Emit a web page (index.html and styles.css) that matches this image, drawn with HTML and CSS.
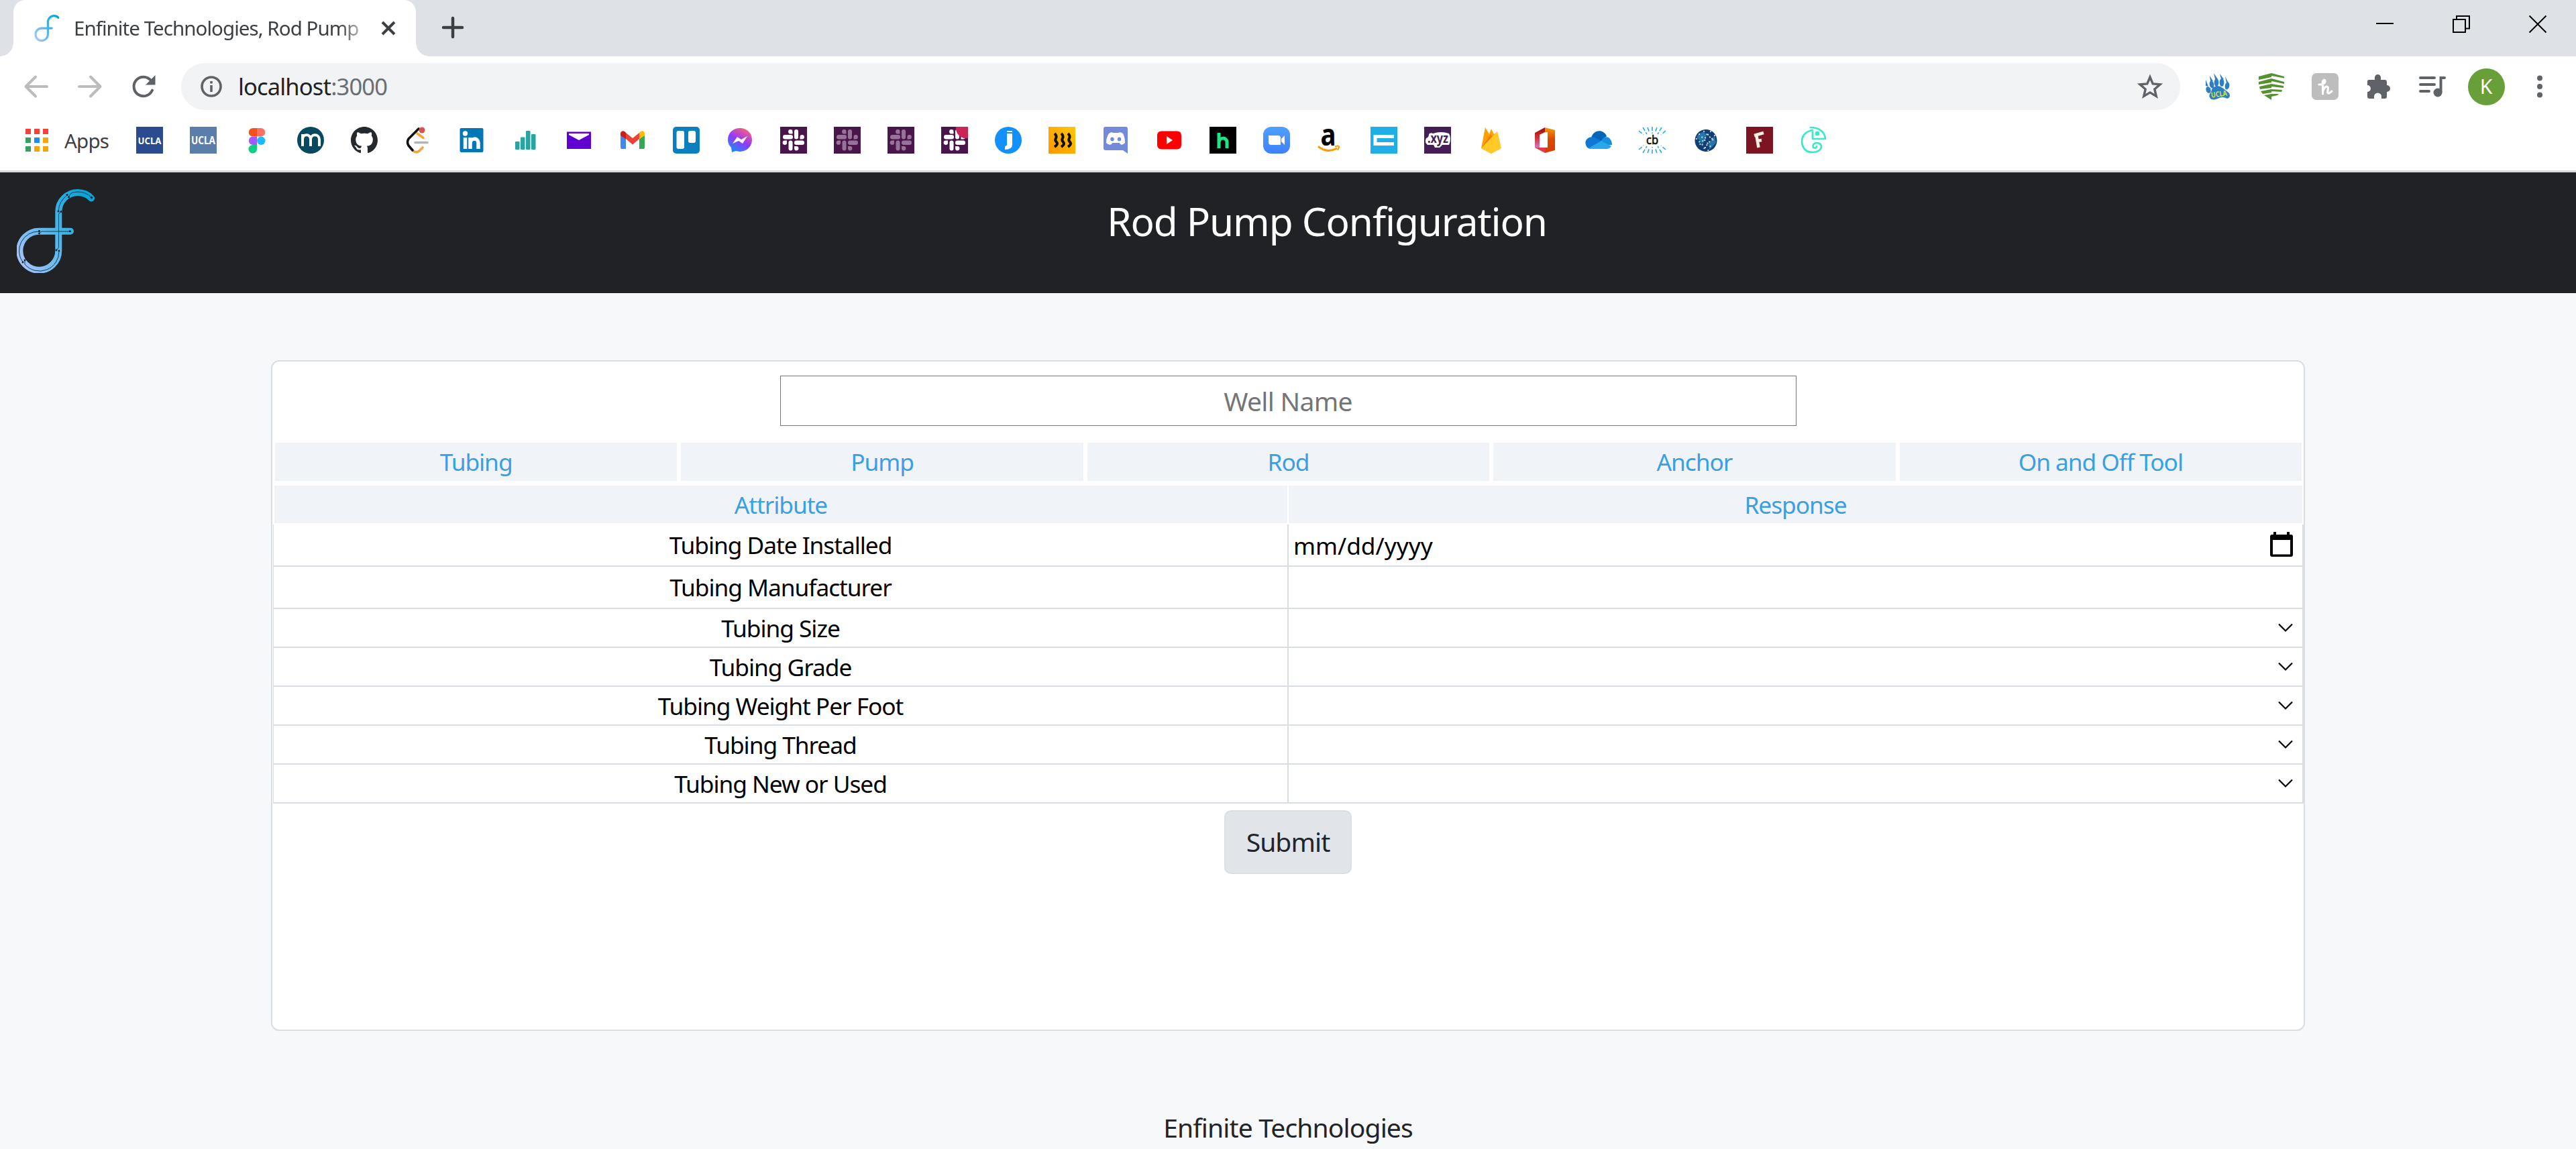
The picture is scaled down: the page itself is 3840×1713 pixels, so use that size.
FILE: index.html
```html
<!DOCTYPE html>
<html lang="en">
<head>
<meta charset="utf-8">
<title>Enfinite Technologies, Rod Pump Configuration</title>
<link rel="stylesheet" href="styles.css">
</head>
<body>
<svg class="defs" width="0" height="0" aria-hidden="true">
  <defs>
    <linearGradient id="brand" gradientUnits="userSpaceOnUse" x1="0" y1="100" x2="112" y2="30"><stop offset="0" stop-color="#a3c3fa"/><stop offset=".5" stop-color="#52b6e8"/><stop offset="1" stop-color="#0aa6d8"/></linearGradient>
    <linearGradient id="msg" x1="0.2" y1="1" x2="0.75" y2="0"><stop offset="0" stop-color="#1292ff"/><stop offset=".5" stop-color="#9139fb"/><stop offset="1" stop-color="#ff5f78"/></linearGradient>
    <linearGradient id="coil" x1="0" y1="1" x2="1" y2="0"><stop offset="0" stop-color="#ff9500"/><stop offset="1" stop-color="#ffc800"/></linearGradient>
    <linearGradient id="zoomg" x1="0" y1="0" x2="0" y2="1"><stop offset="0" stop-color="#4fa0ff"/><stop offset="1" stop-color="#3f80fb"/></linearGradient>
    <linearGradient id="office" x1="0" y1="0" x2="0" y2="1"><stop offset="0" stop-color="#9c0e10"/><stop offset=".5" stop-color="#d2322c"/><stop offset="1" stop-color="#d673c5"/></linearGradient>
    <linearGradient id="office2" x1="0" y1="0" x2="0" y2="1"><stop offset="0" stop-color="#f59a00"/><stop offset=".45" stop-color="#dd4a00"/><stop offset="1" stop-color="#d83b01"/></linearGradient>
    <symbol id="logo" viewBox="0 0 116 125">
      <path fill="none" stroke="url(#brand)" stroke-width="10" stroke-linecap="round" d="M111 13.500C106 8 99 5 91 5A28.700 28.700 0 0 0 62.300 33.700V92A29 29 0 1 1 33.300 62.700H80"/>
    </symbol>
    <symbol id="slack" viewBox="0 0 40 40">
      <rect x="4" y="12" width="15" height="6.500" rx="3.200"/><rect x="21" y="4" width="6" height="14.500" rx="3"/><rect x="21" y="20.500" width="15" height="6.500" rx="3.200"/><rect x="12.500" y="20.500" width="6" height="15" rx="3"/>
      <path d="M18.500 10.500H15.500A3.200 3.200 0 1 1 18.500 7.300ZM29.500 18.500V15.300A3.200 3.200 0 1 1 32.700 18.500ZM21 29H24A3.200 3.200 0 1 1 21 32.300ZM10 20.500V23.700A3.200 3.200 0 1 1 7 20.500Z"/>
    </symbol>
  </defs>
</svg>

<div class="tabstrip">
  <div class="tab">
    <svg class="favicon" viewBox="0 0 116 125"><use href="#logo"/></svg>
    <span class="tab-title">Enfinite Technologies, Rod Pump</span>
    <svg class="tab-close" viewBox="0 0 24 24"><path d="M3 3L21 21M21 3L3 21"/></svg>
  </div>
  <svg class="newtab" viewBox="0 0 32 32"><path d="M16 2V30M2 16H30"/></svg>
  <div class="window-controls">
    <svg viewBox="0 0 26 26"><path d="M0 12H26"/></svg>
    <svg viewBox="0 0 26 26"><path d="M1 6H19V25H1ZM6 6V1H25V19.500H19"/></svg>
    <svg viewBox="0 0 26 26"><path d="M.5.5L25.500 25.500M25.500.5L.5 25.500"/></svg>
  </div>
</div>

<div class="toolbar">
  <div class="navigation">
    <svg class="dim" viewBox="0 0 40 40"><path d="M36 20H5M19 5.500L4.500 20L19 34.500"/></svg>
    <svg class="dim" viewBox="0 0 40 40"><path d="M4 20H35M21 5.500L35.500 20L21 34.500"/></svg>
    <svg viewBox="0 0 40 40"><path d="M33 25.500A14.300 14.300 0 1 1 31 11"/><path class="solid" d="M37.500 3V17.500H23Z"/></svg>
  </div>
  <div class="omnibox">
    <svg class="info" viewBox="0 0 32 32"><circle cx="16" cy="16" r="14"/><path d="M16 14V24M16 8V11.500"/></svg>
    <span class="url">localhost<span class="port">:3000</span></span>
    <svg class="star" viewBox="0 0 38 36"><path d="M19 4L23.200 14L34 14.900L25.800 22L28.300 32.500L19 26.900L9.700 32.500L12.200 22L4 14.900L14.800 14Z"/></svg>
  </div>
  <div class="extensions">
    <svg viewBox="0 0 40 40"><g fill="#2d7fc1"><path d="M12 22Q20 16 27 22Q33 26 37 30Q40 36 34 38Q27 34 20 38Q10 42 8 36Q6 33 10 28Z"/><ellipse cx="6" cy="25" rx="3.500" ry="5" transform="rotate(-20 6 25)"/><ellipse cx="11" cy="17" rx="3.300" ry="5.500" transform="rotate(-12 11 17)"/><ellipse cx="18" cy="14" rx="3.400" ry="6"/><ellipse cx="26" cy="14" rx="3.400" ry="6"/><ellipse cx="34" cy="19" rx="3.300" ry="5.500" transform="rotate(12 34 19)"/><path d="M2 19L2 10L6 20ZM9 12L8 4L13 12ZM16 9L14 0L20 9ZM25 9L23 1L29 9ZM33 15L31 5L36 15Z"/></g><text x="22" y="35" fill="#dce33a" font-size="11" font-weight="700" text-anchor="middle" textLength="24" lengthAdjust="spacingAndGlyphs" transform="rotate(-8 22 33)">UCLA</text></svg>
    <svg viewBox="0 0 40 40"><g fill="#55912f"><path d="M1 5L20 0V6L1 10ZM20 0L39 5V7.500L20 4Z"/><path d="M1 13L20 8V14L1 17ZM20 8L39 13V16L20 12Z"/><path d="M2 20L20 16V22L3 24ZM20 16L38 19V22L20 20Z"/><path d="M4 27L20 24V29L7 31ZM20 24L36 25L35 28L20 27Z"/><path d="M9 33L20 31L31 31L29 33L20 35V40Z"/></g></svg>
    <svg viewBox="0 0 40 40"><rect width="40" height="40" rx="7" fill="#bdbdbd"/><path d="M11 17Q20 17 20 12Q19 8 16.500 12V31M16.500 27Q20 18 24 21C26 23 21 31 26 30L30 27" fill="none" stroke="#fff" stroke-width="3.200" stroke-linecap="round" stroke-linejoin="round"/></svg>
    <svg viewBox="0 0 40 40"><path fill="#5f6368" d="M5 10H14V6.500A4.500 4.500 0 0 1 23 6.500V10H29Q32 10 32 13V18A5 5 0 0 1 32 28V35Q32 38 29 38H24V35A5 5 0 0 0 13 35V38H6Q3 38 3 35V28A4.800 4.800 0 0 0 3 18V13Q3 10 5 10Z"/></svg>
    <svg viewBox="0 0 40 40"><g fill="none" stroke="#5f6368" stroke-width="4" stroke-linecap="round"><path d="M2 7H23M2 17H23M2 27H15"/><path d="M32.500 28V7H38"/></g><ellipse cx="28" cy="29" rx="6.500" ry="6.500" fill="#5f6368"/></svg>
    <span class="avatar">K</span>
    <svg viewBox="0 0 40 40" fill="#5f6368"><circle cx="20" cy="7.500" r="4"/><circle cx="20" cy="20" r="4"/><circle cx="20" cy="32.500" r="4"/></svg>
  </div>
</div>

<div class="bookmarks">
  <div class="apps">
    <svg viewBox="0 0 34 34"><path fill="#f83f38" d="M0 0H8V8H0ZM13 0H21V8H13ZM26 0H34V8H26Z"/><path fill="#36a05c" d="M0 13H8V21H0ZM0 26H8V34H0Z"/><path fill="#1f8bf5" d="M13 13H21V21H13Z"/><path fill="#f5a506" d="M26 13H34V21H26ZM13 26H21V34H13ZM26 26H34V34H26Z"/></svg>
    <span>Apps</span>
  </div>
  <svg viewBox="0 0 40 40"><rect width="40" height="40" fill="#2b4a90"/><text x="20" y="26" fill="#fff" font-size="15" font-weight="700" text-anchor="middle" textLength="35" lengthAdjust="spacingAndGlyphs">UCLA</text></svg>
  <svg viewBox="0 0 40 40"><rect width="40" height="40" fill="#5a7daa"/><text x="20" y="26" fill="#fff" font-size="16" font-weight="700" text-anchor="middle" textLength="36" lengthAdjust="spacingAndGlyphs">UCLA</text></svg>
  <svg viewBox="0 0 40 40"><path fill="#f4511e" d="M20 2H14A6.200 6.200 0 0 0 14 14.500H20Z"/><path fill="#ff7262" d="M20 2H26A6.200 6.200 0 0 1 26 14.500H20Z"/><path fill="#a259ff" d="M20 14.500H14A6.200 6.200 0 0 0 14 27H20Z"/><circle cx="26.300" cy="20.800" r="6.200" fill="#1abcfe"/><path fill="#0acf83" d="M20 27H14A6.300 6.300 0 1 0 20 33.500Z"/></svg>
  <svg viewBox="0 0 40 40"><circle cx="20" cy="20" r="20" fill="#07495f"/><path d="M8 29V11M8 19C8 10 20 10 20 19V29M20 19C20 10 33 10 33 19V29" fill="none" stroke="#fff" stroke-width="4"/></svg>
  <svg viewBox="0 0 16 16"><path fill="#24292e" d="M8 0C3.580 0 0 3.580 0 8c0 3.540 2.290 6.530 5.470 7.590.4.070.55-.17.55-.38 0-.19-.01-.82-.01-1.490-2.010.37-2.530-.49-2.690-.94-.09-.23-.48-.94-.82-1.130-.28-.15-.68-.52-.01-.53.63-.01 1.080.58 1.230.82.72 1.210 1.870.87 2.330.66.070-.52.28-.87.51-1.070-1.780-.2-3.640-.89-3.640-3.950 0-.87.31-1.590.82-2.150-.08-.2-.36-1.020.08-2.120 0 0 .67-.21 2.200.82.64-.18 1.320-.27 2-.27s1.360.09 2 .27c1.530-1.040 2.200-.82 2.200-.82.44 1.100.16 1.920.08 2.120.51.560.82 1.270.82 2.150 0 3.070-1.870 3.750-3.650 3.950.29.25.54.73.54 1.480 0 1.070-.01 1.930-.01 2.200 0 .21.15.46.55.38A8.010 8.010 0 0 0 16 8c0-4.420-3.580-8-8-8Z"/></svg>
  <svg viewBox="0 0 40 40" fill="none" stroke-width="3.600" stroke-linecap="round" stroke-linejoin="round"><path stroke="#f9a533" d="M19 10L28 16.500M12 35Q17 40 22 36L27 31"/><path stroke="#111" d="M21 3L6 18Q3 23 6 28L12 35"/><path stroke="#b3b3b3" d="M16 23.500H34"/><circle cx="26" cy="5" r="4.500" fill="#d65353"/></svg>
  <svg viewBox="0 0 40 40"><rect x="2.500" y="2" width="35" height="36" rx="2" fill="#0177b5"/><circle cx="10.500" cy="10" r="3.700" fill="#fff"/><path d="M10.500 16V33M18 16V33M18 25C18 16 30 16 30 24V33" fill="none" stroke="#fff" stroke-width="5.500"/></svg>
  <svg viewBox="0 0 40 40" fill="#27a5a5"><rect x="5" y="22" width="6.500" height="12" rx="1"/><rect x="13" y="15.500" width="6.500" height="18.500" rx="1"/><rect x="21" y="6" width="6.500" height="28" rx="1"/><rect x="29" y="11" width="6.500" height="23" rx="1"/></svg>
  <svg viewBox="0 0 40 40"><rect x="2" y="7.500" width="36" height="25.500" fill="#6001d2"/><path fill="#fff" d="M5 10H35V12L20 20L5 12Z"/></svg>
  <svg viewBox="0 0 40 40"><path fill="#4285f4" d="M2 12L10 17V33H4Q2 33 2 31Z"/><path fill="#34a853" d="M38 12L30 17V33H36Q38 33 38 31Z"/><path fill="#ea4335" d="M10 9L20 17L30 9V18L20 26.500L10 18Z"/><path fill="#c5221f" d="M2 12C1 6 7 4 10 9V18.500L2 13Z"/><path fill="#fbbc04" d="M38 12C39 6 33 4 30 9V18.500L38 13Z"/></svg>
  <svg viewBox="0 0 40 40"><rect width="40" height="40" rx="5" fill="#0c7fbf"/><rect x="5.500" y="6" width="11.500" height="27" rx="3" fill="#fff"/><rect x="23" y="6" width="11" height="18" rx="3" fill="#fff"/></svg>
  <svg viewBox="0 0 40 40"><path fill="url(#msg)" d="M20 2C10 2 2 9 2 19.500Q2 26 7 31L8 38L14 36C27 40 38 31 38 19.500C38 9 30 2 20 2Z"/><path fill="#fff" d="M9 25L16 15L22 19L31 14L24 25L18 21Z"/></svg>
  <svg viewBox="0 0 40 40"><rect width="40" height="40" fill="#4a154b"/><use href="#slack" fill="#fff"/></svg>
  <svg viewBox="0 0 40 40"><rect width="40" height="40" fill="#4a154b"/><use href="#slack" fill="#987399"/></svg>
  <svg viewBox="0 0 40 40"><rect width="40" height="40" fill="#4a154b"/><use href="#slack" fill="#987399"/></svg>
  <svg viewBox="0 0 40 40"><rect width="40" height="40" fill="#4a154b"/><use href="#slack" fill="#fff"/><path fill="#cd2553" d="M22 0H40V17C29 19 21 10 22 0Z"/></svg>
  <svg viewBox="0 0 40 40"><circle cx="20" cy="20" r="20" fill="#1290fe"/><path fill="#fff" d="M18 6H26V8H18ZM18 10H26V26Q26 34 15 34V29Q18 29 18 26Z"/></svg>
  <svg viewBox="0 0 40 40"><rect width="40" height="40" fill="url(#coil)"/><path fill="none" stroke="#111" stroke-width="4" d="M9 10Q13 14 11 17T12 23T9 30M19 10Q23 14 21 17T22 23T19 30M29 10Q33 14 31 17T32 23T29 30"/></svg>
  <svg viewBox="0 0 40 40"><path fill="#7389da" d="M5 0H35Q38 0 38 3V40L31 35H5Q2 35 2 32V3Q2 0 5 0Z"/><path fill="#fff" d="M10 10Q14 7 16 9H24Q27 7 31 10Q34 16 34 24Q30 28 27 26L26 24H15L14 26Q10 28 6 24Q6 16 10 10Z"/><ellipse cx="15" cy="18.500" rx="2.700" ry="3" fill="#7389da"/><ellipse cx="25.500" cy="18.500" rx="2.700" ry="3" fill="#7389da"/></svg>
  <svg viewBox="0 0 40 40"><rect x="2" y="6.500" width="36" height="27" rx="6" fill="#f00"/><path fill="#fff" d="M16 14L25 20L16 26Z"/></svg>
  <svg viewBox="0 0 40 40"><rect width="40" height="40"/><path fill="none" stroke="#1fe584" stroke-width="5" d="M14 9V32M14 24C14 15 26 15 26 23V32"/></svg>
  <svg viewBox="0 0 40 40"><rect width="40" height="40" rx="12" fill="url(#zoomg)"/><path fill="#fff" d="M8 13H22Q26 13 26 17V27H12Q8 27 8 23ZM27 18L32 13V27L27 22Z"/></svg>
  <svg viewBox="0 0 40 40"><text x="17" y="28" font-size="44" font-weight="700" text-anchor="middle" textLength="23" lengthAdjust="spacingAndGlyphs">a</text><path d="M2 29.500Q16 40 30 32" fill="none" stroke="#f90" stroke-width="3"/><path d="M27 29.500Q34 27 33 31L31 35" fill="none" stroke="#f90" stroke-width="2"/></svg>
  <svg viewBox="0 0 40 40"><rect width="40" height="40" fill="#20aee6"/><path fill="none" stroke="#fff" stroke-width="5" d="M35 14.500H7V25.500H35"/></svg>
  <svg viewBox="0 0 40 40"><rect width="40" height="40" fill="#461e56"/><path fill="#fff" d="M7 11Q9 8 13 10Q25 6 37 10Q41 18 37 27H27L23 31H16L14 27H5Q0 23 3 17Q7 16 7 11Z"/><text x="20.500" y="24" fill="#461e56" font-size="19" font-weight="700" text-anchor="middle" textLength="31" lengthAdjust="spacingAndGlyphs">.xyz</text></svg>
  <svg viewBox="0 0 40 40"><path fill="#ffa000" d="M5 32L11 1L17 11L20 3L24 11L29 8L34 32L20 40Z"/><path fill="#f57c00" d="M5 32L19 11L23 18Z"/><path fill="#ffca28" d="M5 32L29 7L35 32L20 40Z"/></svg>
  <svg viewBox="0 0 40 40"><path fill="url(#office)" d="M20 1L5 9V31L12 31V12L20 8Z"/><path fill="#e4384d" d="M5 31L20 39L26 36L20 31Z"/><path fill="url(#office2)" d="M20 1L35 5V35L20 39V31H24V8H20Z"/></svg>
  <svg viewBox="0 0 40 40"><path fill="#0364b8" d="M9 16C13 4 27 3 32 14L22 23Z"/><path fill="#0f78d4" d="M1 27C-2 18 8 12 16 17L25 22L8 33Q2 32 1 27Z"/><path fill="#1490df" d="M24 21Q28 13 35 16Q40 20 40 27L30 28Z"/><path fill="#28a8ea" d="M5 32L24 21L39 29Q36 33 32 33H10Z"/></svg>
  <svg viewBox="0 0 40 40"><path fill="none" stroke="#2aaae8" stroke-width="1.600" stroke-dasharray="6 2.500" d="M20 0V10M20 40V30M13 1L16 9M27 1L24 9M6 1L12 11M34 1L28 11M0 6L7 12M40 6L33 12M13 39L16 31M27 39L24 31M6 39L12 29M34 39L28 29M0 34L7 28M40 34L33 28"/><text x="20" y="26" fill="#111" font-size="18" text-anchor="middle" textLength="18" lengthAdjust="spacingAndGlyphs" stroke="#111" stroke-width=".7">cb</text></svg>
  <svg viewBox="0 0 40 40"><circle cx="20" cy="20.500" r="16.500" fill="#123e73"/><path fill="#2577a8" d="M6 15Q16 2 21 13L15 26ZM24 25L33 13L35 24L25 34Z"/><path stroke="#c4dded" stroke-width="2.200" stroke-linecap="round" stroke-dasharray=".1 6" fill="none" d="M10 11L30 33M17 7L34 23M6 18L24 36M27 7L8 30M33 13L15 35"/></svg>
  <svg viewBox="0 0 40 40"><rect width="40" height="40" fill="#7c1422"/><path fill="none" stroke="#f7eee6" stroke-width="4.500" d="M18.500 31L15 11M12 13L26 9M16 21L23 20"/></svg>
  <svg viewBox="0 0 40 40" fill="none" stroke="#35eac5" stroke-width="2.700" stroke-linecap="round" stroke-linejoin="round"><path d="M16 1C28 1 37 7 38 18H19V8M19 5Q3 8 3 23Q5 38 19 38C34 38 36 24 25 24Q18 25 20 31Q25 33 25 29"/><circle cx="26" cy="10" r="2" fill="#35eac5"/></svg>
</div>

<header class="navbar">
  <svg class="brand" viewBox="0 0 116 125">
    <use href="#logo"/>
    <g fill="none" stroke="#173a4c"><path d="M111 12Q103 4 91 4Q85 4 81 6L77 12M75 9Q63 18 62 33M65 34L62.500 37V87L59 91M63 92A29 29 0 0 1 12 112V106M9 109A29 29 0 0 1 33 63M33 66L37 63H79"/></g>
    <g fill="#04202c"><circle cx="111.500" cy="12.500" r="1.700"/><circle cx="77.500" cy="12" r="1.400"/><circle cx="75" cy="8.500" r="1.400"/><circle cx="62" cy="33" r="1.400"/><circle cx="66" cy="33.500" r="1.400"/><circle cx="59" cy="91" r="1.400"/><circle cx="63" cy="92" r="1.400"/><circle cx="12" cy="106" r="1.400"/><circle cx="9" cy="109" r="1.400"/><circle cx="33.500" cy="62.500" r="1.400"/><circle cx="33.500" cy="66" r="1.400"/><circle cx="79.500" cy="62.700" r="1.500"/></g>
  </svg>
  <h1>Rod Pump Configuration</h1>
</header>

<main>
  <form class="card">
    <div class="well"><input class="well-name" type="text" placeholder="Well Name"></div>
    <nav class="sections"><a>Tubing</a><a>Pump</a><a>Rod</a><a>Anchor</a><a>On and Off Tool</a></nav>
    <div class="columns"><span>Attribute</span><span>Response</span></div>
    <div class="rows">
      <div class="row tall"><span class="name">Tubing Date Installed</span><span class="field date"><span class="date-text">mm/dd/yyyy</span><svg class="calendar" viewBox="0 0 34 37"><path fill-rule="evenodd" d="M5 0H9V4H25V0H29V4H31Q34 4 34 7V34Q34 37 31 37H3Q0 37 0 34V7Q0 4 3 4H5ZM4 12V33.500H30V12Z"/></svg></span></div>
      <div class="row tall"><span class="name">Tubing Manufacturer</span><span class="field"></span></div>
      <div class="row"><span class="name">Tubing Size</span><span class="field"><svg class="chevron" viewBox="0 0 22 14"><path d="M1 1.500L11 11.500L21 1.500"/></svg></span></div>
      <div class="row"><span class="name">Tubing Grade</span><span class="field"><svg class="chevron" viewBox="0 0 22 14"><path d="M1 1.500L11 11.500L21 1.500"/></svg></span></div>
      <div class="row"><span class="name">Tubing Weight Per Foot</span><span class="field"><svg class="chevron" viewBox="0 0 22 14"><path d="M1 1.500L11 11.500L21 1.500"/></svg></span></div>
      <div class="row"><span class="name">Tubing Thread</span><span class="field"><svg class="chevron" viewBox="0 0 22 14"><path d="M1 1.500L11 11.500L21 1.500"/></svg></span></div>
      <div class="row"><span class="name">Tubing New or Used</span><span class="field"><svg class="chevron" viewBox="0 0 22 14"><path d="M1 1.500L11 11.500L21 1.500"/></svg></span></div>
    </div>
    <button class="submit" type="button">Submit</button>
  </form>
</main>
<footer>Enfinite Technologies</footer>
</body>
</html>
```
FILE: styles.css
```css
* { box-sizing: border-box; }
html, body { margin: 0; height: 100%; }
body {
  display: flex;
  flex-direction: column;
  overflow: hidden;
  background: #f7f8fa;
  color: #212529;
  font-family: "Noto Sans", "Open Sans", sans-serif;
  font-size: 39px;
}
svg { display: block; flex: none; overflow: visible; }
.defs { position: absolute; }

/* Tab strip */
.tabstrip { display: flex; flex: none; height: 84px; padding-left: 20px; background: #dee1e6; }
.tab {
  position: relative;
  display: flex;
  align-items: center;
  width: 600px;
  padding: 0 29px 0 30px;
  border-radius: 18px 18px 0 0;
  background: #fff;
}
.tab::before, .tab::after {
  content: "";
  position: absolute;
  bottom: 0;
  width: 20px;
  height: 20px;
}
.tab::before { left: -20px; background: radial-gradient(circle at 0 0, transparent 19.5px, #fff 20px); }
.tab::after { right: -20px; background: radial-gradient(circle at 100% 0, transparent 19.5px, #fff 20px); }
.favicon { width: 40px; height: 40px; }
.tab-title {
  flex: 1;
  margin: 0 22px 2px 20px;
  white-space: nowrap;
  color: #3c4043;
  font-size: 29.5px;
  letter-spacing: -0.95px;
  -webkit-mask-image: linear-gradient(90deg, #000 91%, rgba(0, 0, 0, 0.2));
  mask-image: linear-gradient(90deg, #000 91%, rgba(0, 0, 0, 0.2));
}
.tab-close { width: 24px; height: 24px; fill: none; stroke: #3c4043; stroke-width: 4; }
.newtab { width: 32px; height: 32px; margin: 25px 0 0 39px; fill: none; stroke: #3c4043; stroke-width: 4.5; stroke-linecap: round; }
.window-controls { display: flex; margin-left: auto; }
.window-controls svg { width: 26px; height: 26px; margin: 23px 44px 0; fill: none; stroke: #000; stroke-width: 2; }

/* Address bar */
.toolbar { display: flex; flex: none; align-items: center; height: 90px; padding: 0 14px 0 34px; background: #fff; }
.navigation { display: flex; gap: 40px; margin-right: 36px; }
.navigation svg { width: 40px; height: 40px; fill: none; stroke: #5f6368; stroke-width: 4; stroke-linecap: round; stroke-linejoin: round; }
.navigation .dim { stroke: #babcbe; }
.navigation .solid { fill: #5f6368; stroke: none; }
.omnibox { display: flex; align-items: center; flex: 1; height: 70px; padding: 0 26px 0 29px; border-radius: 35px; background: #f1f3f4; }
.info { width: 32px; height: 32px; fill: none; stroke: #5f6368; stroke-width: 3.6; }
.url { margin: -2px auto 0 24px; color: #202124; font-size: 34.5px; letter-spacing: -0.85px; }
.port { color: #6b6f73; }
.star { width: 38px; height: 36px; fill: none; stroke: #5f6368; stroke-width: 3.4; }
.extensions { display: flex; align-items: center; margin-left: 16px; }
.extensions svg { width: 40px; height: 40px; margin: 0 20px; }
.avatar {
  width: 55px;
  height: 55px;
  margin: 0 12.5px;
  border-radius: 50%;
  background: #689f38;
  color: #fff;
  font-size: 30px;
  line-height: 54px;
  text-align: center;
}

/* Bookmarks */
.bookmarks { display: flex; flex: none; align-items: center; gap: 40px; height: 83px; padding: 2px 38px 12px; border-bottom: 3px solid #d8dadf; background: #fff; }
.bookmarks > svg { width: 40px; height: 40px; }
.apps { display: flex; align-items: center; gap: 24px; width: 125px; color: #3c4043; font-size: 29.5px; letter-spacing: -0.8px; }
.apps svg { width: 34px; height: 34px; }

/* Page header */
.navbar { display: flex; flex: none; height: 180px; padding: 25px; background: #212225; }
.brand { width: 116px; height: 125px; }
.navbar h1 { flex: 1; margin: 7px 0 0; color: #fff; font-size: 58.5px; font-weight: 400; line-height: 80px; letter-spacing: -1.1px; text-align: center; }

/* Configuration form */
main { flex: none; padding: 100px 404px 0; }
.card { display: flex; flex-direction: column; height: 1000px; border: 2px solid #d9dee5; border-radius: 12px; background: #fff; }
.well { display: flex; justify-content: center; padding: 21px 0 25px; }
.well-name { width: 1515px; height: 75px; padding: 0 0 1px; border: 1.5px solid #767676; background: #fff; font: inherit; letter-spacing: -0.7px; text-align: center; }
.well-name::placeholder { color: #757575; }
.sections { display: grid; grid-template-columns: repeat(5, 1fr); gap: 6px; height: 57px; margin: 0 3px 7px 4px; }
.sections a, .columns span {
  display: flex;
  align-items: center;
  justify-content: center;
  padding-bottom: 1px;
  background: #f0f3f8;
  color: #38a0e4;
  font-size: 35.3px;
  letter-spacing: -1.05px;
}
.columns { display: grid; grid-template-columns: 1510px 1fr; gap: 2px; height: 56px; margin: 0 2px 2px 3px; }
.rows { border: solid #d9dee5; border-width: 0 2px 0 1px; margin-left: 1px; color: #000; font-size: 35.3px; letter-spacing: -1.05px; }
.row { display: grid; grid-template-columns: 1511px 1fr; height: 58px; border-bottom: 2px solid #d9dee5; }
.row.tall { height: 63px; }
.name { display: flex; align-items: center; justify-content: center; padding-bottom: 1px; }
.field { display: flex; align-items: center; justify-content: flex-end; padding-right: 14px; border-left: 2px solid #d9dee5; }
.date { justify-content: space-between; padding-left: 7px; }
.date-text { letter-spacing: 0; }
.calendar { width: 34px; height: 37px; margin-bottom: 2px; }
.chevron { width: 22px; height: 14px; margin-bottom: 1px; fill: none; stroke: #000; stroke-width: 2.2; }
.submit { align-self: center; width: 190px; height: 95px; margin-top: 10px; padding: 0 0 2px; border: 2px solid #d9dee3; border-radius: 10px; background: #e1e4e9; color: #212529; font: inherit; letter-spacing: -0.9px; }

footer { flex: none; margin-top: 116px; line-height: 56px; letter-spacing: -0.85px; text-align: center; }
```
